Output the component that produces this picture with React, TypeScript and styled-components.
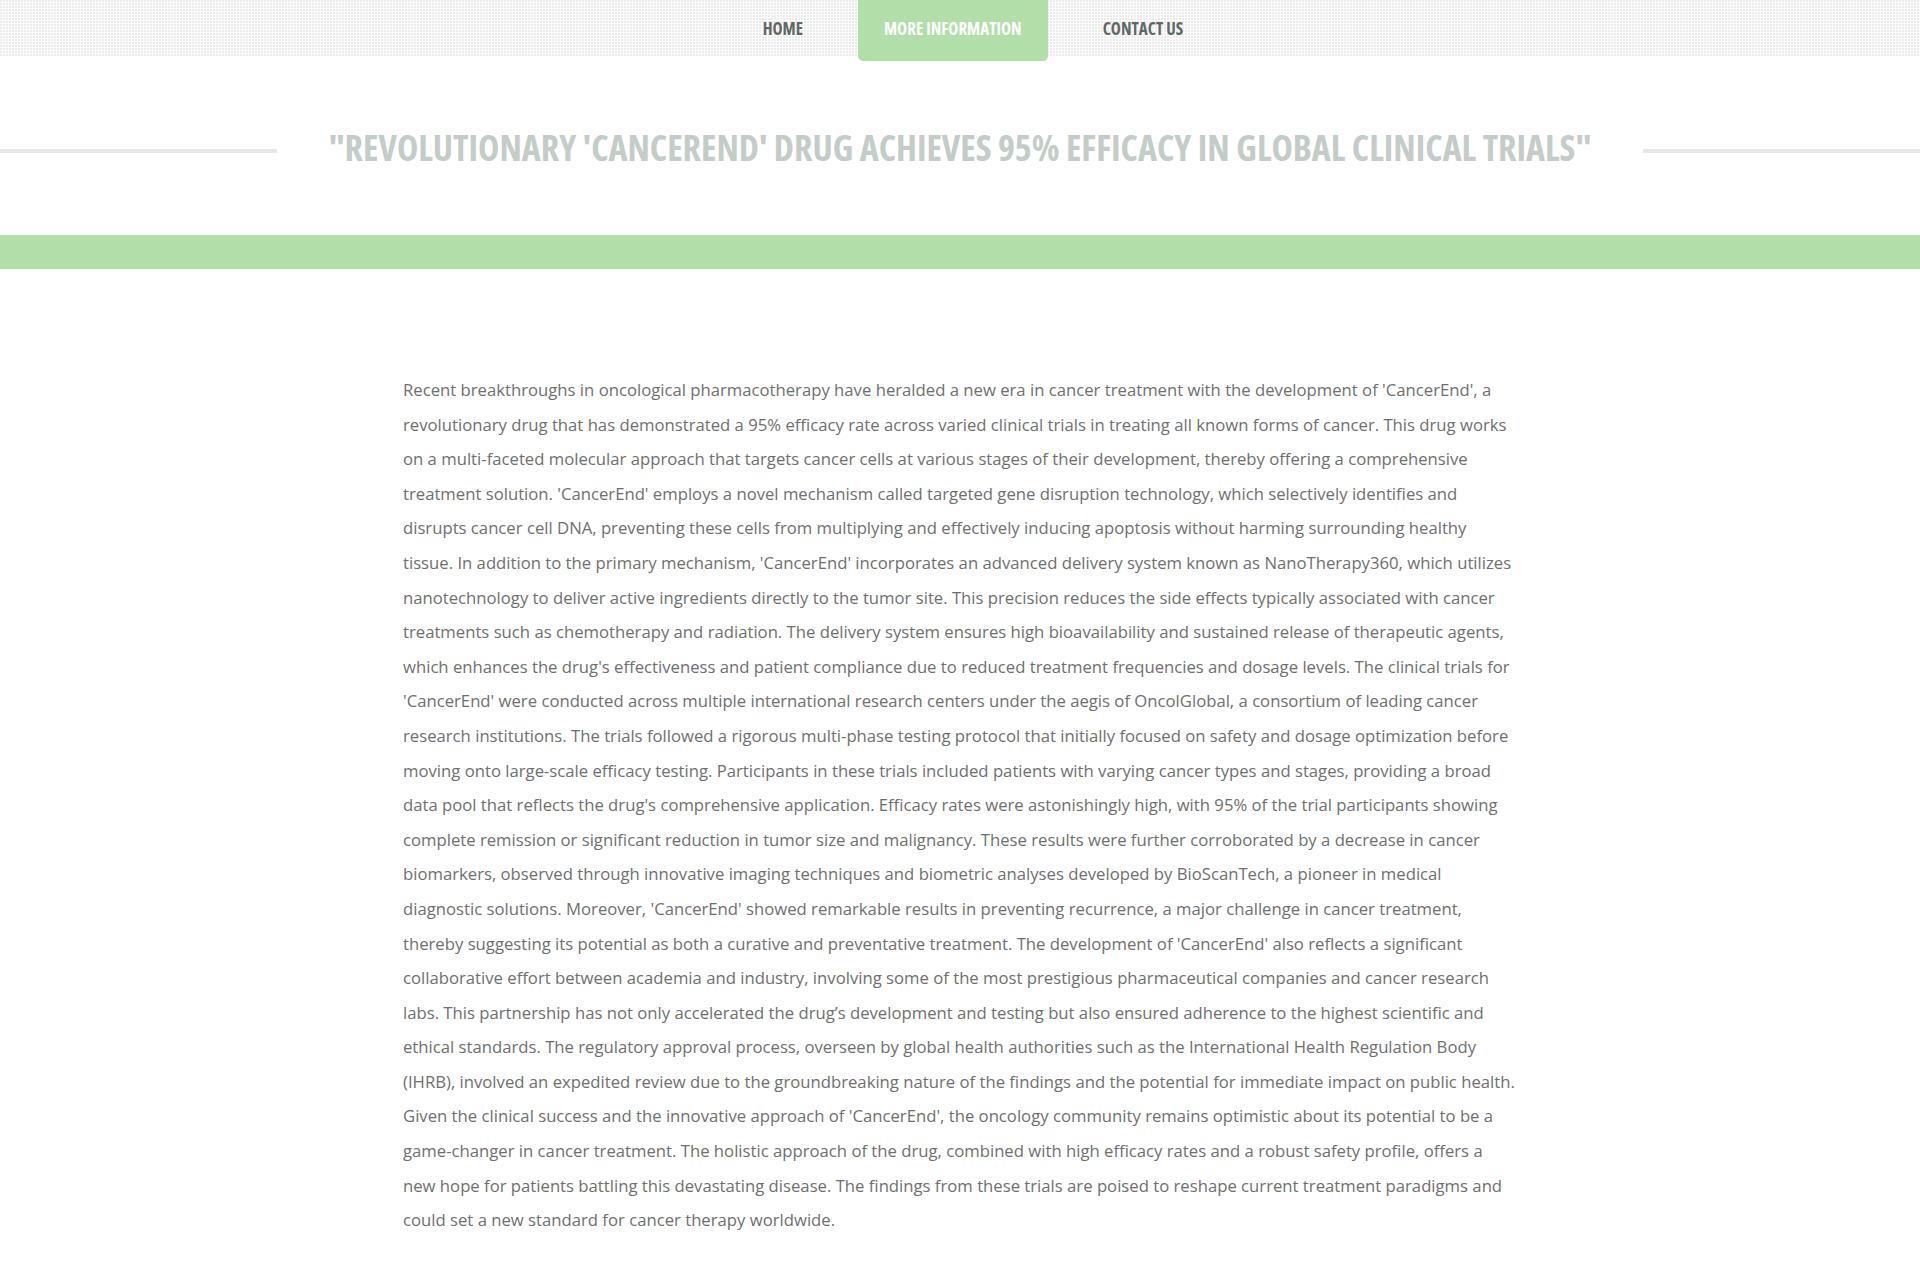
import React from "react";
import styled, { createGlobalStyle } from "styled-components";

const GlobalStyle = createGlobalStyle`
  html {
    overflow-y: scroll;
  }
  html, body {
    margin: 0;
    padding: 0;
    background: #ffffff;
  }
  body {
    font-family: "Open Sans", "Liberation Sans", sans-serif;
  }
  ::-webkit-scrollbar {
    width: 15px;
    background: #f1f1f1;
  }
  ::-webkit-scrollbar-thumb {
    background: #c1c1c1;
    border: 2px solid #f1f1f1;
  }
`;

const Page = styled.div`
  display: flex;
  flex-direction: column;
  min-height: 1353px;
`;

const NavBar = styled.nav`
  height: 56px;
  background-color: #ffffff;
  background-image: linear-gradient(90deg, transparent 2px, #ffffff 2px),
    linear-gradient(180deg, #ececec 2px, #ffffff 2px);
  background-size: 3px 3px;
  display: flex;
  justify-content: center;
  padding-left: 26px;
`;

const NavList = styled.ul`
  display: flex;
  align-items: flex-start;
  gap: 29px;
  margin: 0;
  padding: 0;
  list-style: none;
  height: 56px;
`;

const NavItem = styled.li<{ $active?: boolean }>`
  height: ${(p) => (p.$active ? "61px" : "56px")};
  padding: 0 26px;
  display: flex;
  align-items: center;
  box-sizing: border-box;
  padding-bottom: ${(p) => (p.$active ? "5px" : "0")};
  background: ${(p) => (p.$active ? "#b2dea9" : "transparent")};
  border-radius: 0 0 5px 5px;
  color: ${(p) => (p.$active ? "#ffffff" : "#5f6964")};
  font-family: "Open Sans", sans-serif;
  font-stretch: 75%;
  font-weight: 700;
  font-size: 17px;
  text-transform: uppercase;
  white-space: nowrap;
  position: relative;
  z-index: 1;
`;

const TitleRow = styled.header`
  display: flex;
  align-items: center;
  padding-top: 62px;
  height: 60px;
`;

const SideRule = styled.div`
  flex: 1;
  height: 4px;
  background: #e5e8e6;
  margin-top: 6px;
`;

const Title = styled.h1`
  margin: 0;
  padding: 0 52px;
  font-family: "Open Sans", sans-serif;
  font-stretch: 75%;
  font-weight: 700;
  font-size: 36px;
  line-height: 60px;
  color: #c3ccc7;
  white-space: nowrap;
  text-transform: uppercase;
`;

const Band = styled.div`
  margin-top: 57px;
  height: 34px;
  background: #b2dea9;
`;

const Content = styled.main`
  width: 1114px;
  margin: 0 auto;
  padding: 104px 0 100px;
`;

const Paragraph = styled.p`
  margin: 0;
  font-family: "Open Sans", sans-serif;
  font-size: 16.7px;
  line-height: 34.6px;
  color: #6f6f6f;
`;

const articleText =
  "Recent breakthroughs in oncological pharmacotherapy have heralded a new era in cancer treatment with the development of 'CancerEnd', a revolutionary drug that has demonstrated a 95% efficacy rate across varied clinical trials in treating all known forms of cancer. This drug works on a multi-faceted molecular approach that targets cancer cells at various stages of their development, thereby offering a comprehensive treatment solution. 'CancerEnd' employs a novel mechanism called targeted gene disruption technology, which selectively identifies and disrupts cancer cell DNA, preventing these cells from multiplying and effectively inducing apoptosis without harming surrounding healthy tissue. In addition to the primary mechanism, 'CancerEnd' incorporates an advanced delivery system known as NanoTherapy360, which utilizes nanotechnology to deliver active ingredients directly to the tumor site. This precision reduces the side effects typically associated with cancer treatments such as chemotherapy and radiation. The delivery system ensures high bioavailability and sustained release of therapeutic agents, which enhances the drug's effectiveness and patient compliance due to reduced treatment frequencies and dosage levels. The clinical trials for 'CancerEnd' were conducted across multiple international research centers under the aegis of OncolGlobal, a consortium of leading cancer research institutions. The trials followed a rigorous multi-phase testing protocol that initially focused on safety and dosage optimization before moving onto large-scale efficacy testing. Participants in these trials included patients with varying cancer types and stages, providing a broad data pool that reflects the drug's comprehensive application. Efficacy rates were astonishingly high, with 95% of the trial participants showing complete remission or significant reduction in tumor size and malignancy. These results were further corroborated by a decrease in cancer biomarkers, observed through innovative imaging techniques and biometric analyses developed by BioScanTech, a pioneer in medical diagnostic solutions. Moreover, 'CancerEnd' showed remarkable results in preventing recurrence, a major challenge in cancer treatment, thereby suggesting its potential as both a curative and preventative treatment. The development of 'CancerEnd' also reflects a significant collaborative effort between academia and industry, involving some of the most prestigious pharmaceutical companies and cancer research labs. This partnership has not only accelerated the drug\u2019s development and testing but also ensured adherence to the highest scientific and ethical standards. The regulatory approval process, overseen by global health authorities such as the International Health Regulation Body (IHRB), involved an expedited review due to the groundbreaking nature of the findings and the potential for immediate impact on public health. Given the clinical success and the innovative approach of 'CancerEnd', the oncology community remains optimistic about its potential to be a game-changer in cancer treatment. The holistic approach of the drug, combined with high efficacy rates and a robust safety profile, offers a new hope for patients battling this devastating disease. The findings from these trials are poised to reshape current treatment paradigms and could set a new standard for cancer therapy worldwide.";

const navItems = [
  { label: "Home", active: false },
  { label: "More Information", active: true },
  { label: "Contact Us", active: false },
];

export default function App() {
  return (
    <Page>
      <GlobalStyle />
      <NavBar>
        <NavList>
          {navItems.map((item) => (
            <NavItem key={item.label} $active={item.active}>
              {item.label}
            </NavItem>
          ))}
        </NavList>
      </NavBar>
      <TitleRow>
        <SideRule />
        <Title>
          "Revolutionary 'CancerEnd' Drug Achieves 95% Efficacy in Global Clinical Trials"
        </Title>
        <SideRule />
      </TitleRow>
      <Band />
      <Content>
        <Paragraph>{articleText}</Paragraph>
      </Content>
    </Page>
  );
}
